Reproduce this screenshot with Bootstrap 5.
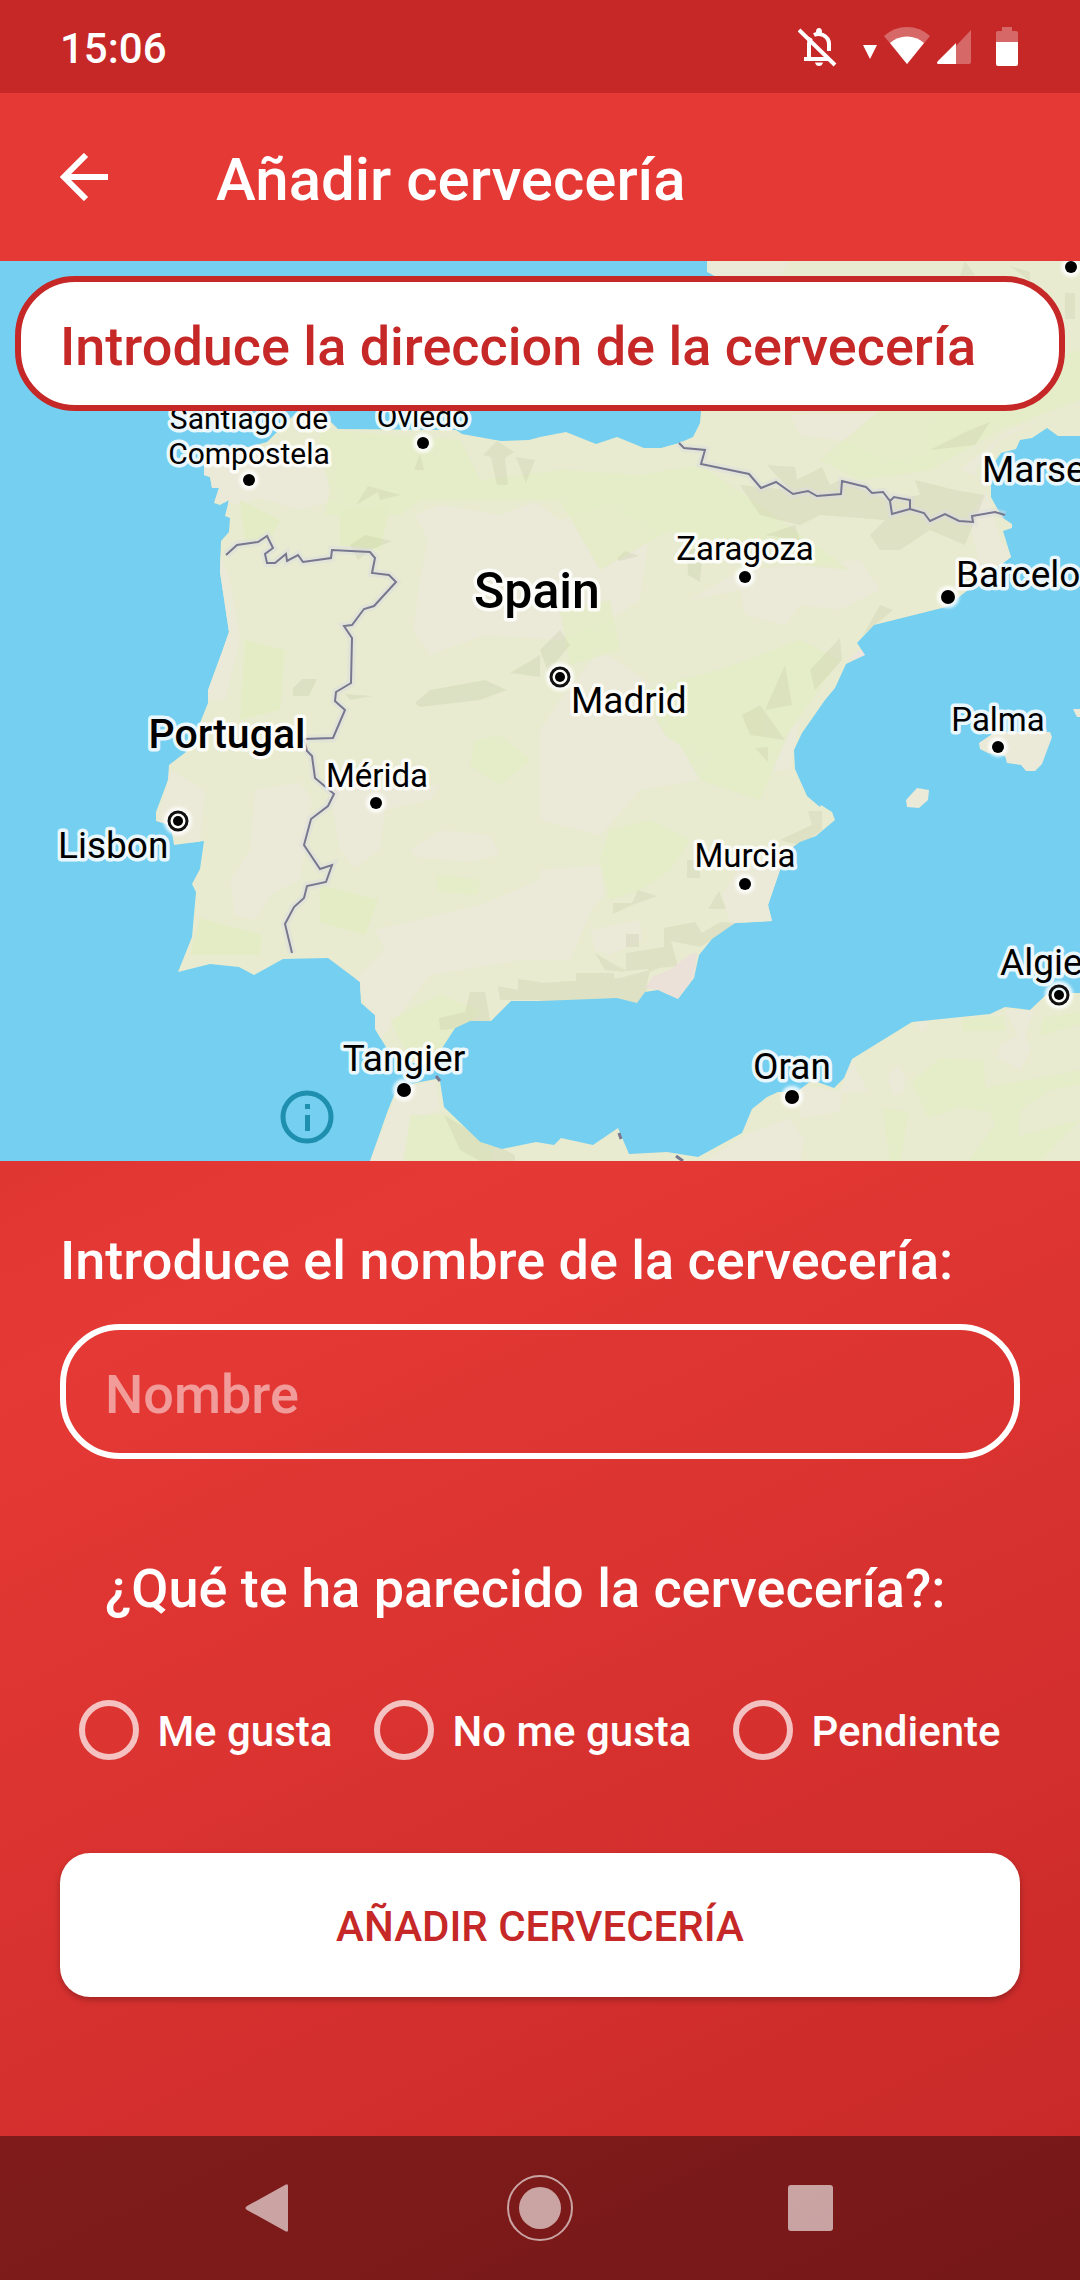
<!DOCTYPE html>
<html lang="es">
<head>
<meta charset="utf-8">
<meta name="viewport" content="width=device-width, initial-scale=1">
<title>Añadir cervecería</title>
<link href="https://cdn.jsdelivr.net/npm/bootstrap@5.3.0/dist/css/bootstrap.min.css" rel="stylesheet">
<style>
  body {
    font-family: Roboto, "Liberation Sans", sans-serif;
    font-weight: 500;
    font-size: 54px;
    line-height: 63px;
    color: #fff;
  }
  .screen { background: linear-gradient(155deg, #c62828, #e53935 50%, #c62828); }
  .status-bar { height: 93px; padding: 0 62px 0 60px; background: #c62828; font-size: 42px; line-height: 48px; }
  .clock { padding-top: 4px; }
  .status-icons { gap: 7px; }
  .status-icons .bell { margin-right: 18px; }
  .status-icons .battery { margin-left: 18px; }
  .app-bar { height: 168px; padding: 0 60px; background: #e53935; }
  .app-title { font-size: 60px; line-height: 70px; font-weight: 500; margin-left: 108px; padding-top: 6px; }
  .search-holder { top: 15px; left: 15px; right: 15px; }
  .pill, .pill:focus {
    height: 135px;
    border: 6px solid #fff;
    border-radius: 60px;
    padding: 6px 39px 0;
    background: transparent;
    color: #fff;
    font-size: 54px;
    font-weight: 500;
    line-height: 63px;
  }
  .pill::placeholder { color: rgba(255, 255, 255, .5); opacity: 1; }
  .pill-search, .pill-search:focus { border-color: #c62828; background: #fff; color: #c62828; }
  .pill-search::placeholder { color: #c62828; }
  .place-form { padding: 68px 60px 100px; }
  .name-label { margin-bottom: 32px; }
  .opinion { margin-top: 98px; }
  .opinion legend { font-size: 54px; line-height: 63px; padding-left: 45px; margin-bottom: 80px; }
  .choices { gap: 42px; }
  .choice { gap: 18px; font-size: 42px; line-height: 56px; }
  .choice label { padding-top: 4px; }
  .choice .form-check-input {
    width: 60px; height: 60px; margin: 0;
    border: 6px solid rgba(255, 255, 255, .7);
    background-color: transparent;
  }
  .send { height: 144px; margin-top: 93px; padding-top: 8px; border-radius: 30px; font-size: 42px; font-weight: 500; color: #c62828; box-shadow: 0 3px 6px rgba(0, 0, 0, .25); }
  .nav-keys { height: 144px; background: rgba(0, 0, 0, .4); gap: 203px; }
  .key { padding: 0; border: 0; background: none; line-height: 0; }
  .village { font-size: 30px; font-weight: 400; }
  .town { font-size: 33px; font-weight: 400; }
  .city { font-size: 37px; font-weight: 400; }
  .nation { font-size: 41px; font-weight: 500; }
  .nation-lg { font-size: 50px; font-weight: 500; }
  .map-text { fill: #000; stroke: #fff; stroke-opacity: .85; stroke-width: 7; stroke-linejoin: round; paint-order: stroke; }
</style>
</head>
<body>
<div class="screen d-flex flex-column min-vh-100">

  <div class="status-bar d-flex align-items-center justify-content-between">
    <span class="clock">15:06</span>
    <div class="status-icons d-flex align-items-center">
      <svg class="bell" width="40" height="40" viewBox="0 0 40 40" fill="none" stroke="#fff" stroke-width="4" aria-hidden="true">
        <path d="M1 3 37 38"/>
        <path d="M6 32H30M11 32V17Q11 14 13 11M16 8Q20 6 25 8Q31 11 31 17V24" />
        <path d="M17 35.500H25Q24 39 21 39T17 35.500Z M18 5Q18 1 21 1T24 5V7H18Z" fill="#fff" stroke="none"/>
      </svg>
      <svg width="14" height="40" viewBox="0 0 14 40" aria-hidden="true"><path d="M0 18H14L7 32Z" fill="#fff"/></svg>
      <svg width="46" height="40" viewBox="0 0 46 40" aria-hidden="true">
        <path d="M23 37 0 9Q10 0 23 0T46 9Z" fill="#fff" fill-opacity=".3"/>
        <path d="M23 37 6 16Q13 9.500 23 9.500T40 16Z" fill="#fff"/>
      </svg>
      <svg width="34" height="40" viewBox="0 0 34 40" aria-hidden="true">
        <path d="M2 37 34 3V35Q34 37 32 37Z" fill="#fff" fill-opacity=".3"/>
        <path d="M19 37H1Q-1 36 1 34L19 16Z" fill="#fff"/>
      </svg>
      <svg class="battery" width="22" height="40" viewBox="0 0 22 40" aria-hidden="true">
        <path d="M0 15V6Q0 4 2 4H6V0H16V4H20Q22 4 22 6V15Z" fill="#fff" fill-opacity=".3"/>
        <path d="M0 15H22V37Q22 39 20 39H2Q0 39 0 37Z" fill="#fff"/>
      </svg>
    </div>
  </div>

  <header class="app-bar d-flex align-items-center">
    <a href="#" class="d-flex" aria-label="Volver">
      <svg width="48" height="48" viewBox="0 0 48 48" fill="none" stroke="#fff" stroke-width="6"><path d="M48 24H6M26 2 4 24 26 46"/></svg>
    </a>
    <h1 class="app-title mb-0">Añadir cervecería</h1>
  </header>

  <main>
    <div class="position-relative">
      <svg class="d-block w-100" viewBox="0 261 1080 900" role="img" aria-label="Mapa de España">
        <defs>
          <path id="iberia" d="M540 437 529 440 501 441 462 434 456 430 338 429 332 423 317 412 296 413 267 442 248 447 213 450 204 462V475L210 477 212 488H219L214 503 220 505 229 500 225 516 230 518 229 532 221 541 220 572 229 632 222 652 208 690V703L200 723 186 752 169 765 168 780 156 812V821L167 824 172 833 174 845 204 841 200 869 192 884 196 892 192 937 178 972 210 964 239 967 254 975 283 959 328 958 360 982 361 1003 375 1015V1029L386 1047 413 1063 425 1065 442 1048 455 1028 470 1021H491L511 1001H540L617 998 637 1003 645 992 658 990 678 999 694 978 699 955 712 939 735 923 772 921 768 905 780 870 793 847 800 842 816 836 835 820 832 812 821 805 820 807 807 796 795 769 794 750 802 733 825 700 835 688 846 664 865 655 857 643 874 625 946 607 998 567 1011 557 1003 531 1012 528V524L1003 518 997 508 991 497V467L1001 453 1016 449 1020 440 1032 438 1047 428 1058 436H1080V261H707V272L715 276 701 411 700 423 693 437 679 443 661 448H644L617 437 596 444 566 432Z"/>
          <path id="africa" d="M370 1161 388 1110 395 1093 415 1083 436 1079 440 1081 444 1107 480 1142 502 1149 536 1142 554 1145 561 1138 593 1145 618 1128 629 1154 667 1152 698 1157 742 1133 752 1109 767 1097 778 1092H797L812 1080 834 1088 844 1078 852 1059 912 1022 990 1014 1005 1007 1030 1010 1048 993H1080V1161Z"/>
          <path id="isles" d="M979 743 995 732H1050L1052 737 1042 764 1035 771H1026L1021 765 1007 763 1005 756 988 753 980 749ZM906 800 917 788 929 790 928 800 919 808 907 807ZM1073 709H1080V717H1077Z"/>
          <clipPath id="land"><use href="#iberia"/><use href="#africa"/></clipPath>
          <filter id="soft" x="-5%" y="-5%" width="110%" height="110%"><feGaussianBlur stdDeviation="1.500"/></filter>
        </defs>
        <rect y="261" width="1080" height="900" fill="#75cff0"/>
        <g fill="#e8ebcf"><use href="#iberia"/><use href="#africa"/></g>
        <use href="#isles" fill="#ebe9d7"/>
        <g clip-path="url(#land)">
          <!-- dry plains -->
          <g fill="#ebe9d7">
            <path d="M200 455 260 450 335 455 338 500 300 510 258 498 240 505 205 500Z"/>
            <path d="M415 515 440 505 500 515 535 502 560 520 610 505 650 530 640 600 610 620 560 640 485 635 430 655 413 630 420 580 428 540Z"/>
            <path d="M215 540 230 580 240 640 225 700 205 700 225 635Z"/>
            <path d="M255 790 300 782 312 800 300 880 270 895 255 920 235 915 230 880 250 850Z"/>
            <path d="M156 830 170 770 205 790 200 845Z"/>
            <path d="M330 790 440 785 430 800 385 810 380 850 355 868 340 850Z"/>
            <path d="M410 850 440 830 490 835 500 855 470 862 415 857Z"/>
            <path d="M375 930 480 905 540 880 600 890 570 960 520 960 430 975 380 1040 355 980 385 950Z"/>
            <path d="M540 730 560 700 600 650 660 690 670 740 710 760 700 780 640 790 600 835 540 820ZM540 870 600 865 605 895 570 930 540 950Z"/>
            <path d="M590 930 640 920 642 940 610 955 595 950ZM722 895 740 865 790 855 772 925H730Z"/>
            <path d="M690 600 740 570 860 560 880 590 840 610 800 605 785 625 745 615 740 590Z"/>
            <path d="M790 415 930 412 925 455 890 460 840 440 800 435Z"/>
            <path d="M1080 410 1030 425 1000 440 975 470 990 500 1000 540 1015 560 980 570 970 520 990 480 960 470 1010 430Z"/>
            <path d="M708 262H790L780 276H712Z"/>
            <path d="M800 1085 842 1092 840 1112 800 1118ZM790 1118 804 1140 800 1161H705L745 1135ZM852 1060 868 1092H840ZM890 1072 898 1065 906 1078 903 1092 895 1096 888 1082ZM1000 1045 1018 1035 1005 1010 1035 1010 1025 1034 1031 1050 1020 1070 997 1057ZM915 1022 930 1021 922 1032Z"/>
            <path d="M370 1161 398 1090 435 1080 440 1110 410 1120 402 1161ZM790 770 770 770 780 740 800 720Z"/>
          </g>
          <!-- woods and meadows -->
          <g fill="#e4ecc5">
            <path d="M320 430 460 440 480 480 560 470 640 475 700 465 780 520 850 570 700 555 670 530 600 570 560 500 420 500 400 515 325 515 330 490 320 450Z" opacity=".75"/>
            <path d="M240 500 280 520 270 540 245 545ZM245 640 285 650 280 710 240 720ZM340 510 390 505 380 550 340 545Z"/>
            <path d="M200 918 262 935 260 955 190 955ZM320 885 378 900 365 935 320 922Z"/>
            <path d="M640 690 720 670 800 640 840 660 790 730 760 800 700 780 680 745 665 735Z" opacity=".8"/>
            <path d="M610 830 650 820 690 840 670 870 640 890 610 900 600 860ZM390 1020 440 995 480 1010 440 1060 410 1060Z" opacity=".7"/>
            <path d="M963 1018 1002 1016 1006 1030 962 1031ZM940 1058 984 1060 985 1088 1080 1070V1084L1050 1090 1020 1110 1018 1136 1080 1120 1040 1161H968L995 1125 990 1112 960 1107 928 1118 912 1082ZM883 1108 908 1112 904 1140 900 1161H890ZM1040 1036 1043 1018 1080 1012V1024ZM410 1115H500L490 1161H405Z" opacity=".7"/>
            <path d="M880 410 1080 350V400L1000 430 930 470 860 480 820 460ZM475 740 500 735 530 760 500 785 470 765Z" opacity=".7"/>
            <path d="M437 875 480 880 478 895 437 892ZM560 610 610 600 620 650 570 665Z" opacity=".7"/>
          </g>
          <!-- relief shading -->
          <g fill="#7d8a50" opacity=".09">
            <path d="M483 455 497 441 514 452 505 458 508 485H497L491 457ZM516 457 535 460 526 483ZM420 454 424 470H414Z"/>
            <path d="M356 505 368 486 400 495 380 500 378 492ZM350 545 365 535 392 541 370 550 358 560ZM293 688 302 679H317L309 696H293Z"/>
            <path d="M415 703 430 690 485 680 507 690 480 700 420 707ZM345 694 373 696 350 700ZM510 673 540 655V677Z"/>
            <path d="M767 465 795 467 797 480 822 467 830 485 840 480 890 500 920 495 915 480 955 490 985 495 965 545 930 530 900 550H880L870 535 885 520 820 515 800 525 760 515 740 485 790 490Z"/>
            <path d="M765 535 795 525 800 540ZM687 549H703L700 582 688 575ZM617 558 625 551 639 556 620 561ZM863 635 880 605 893 610 875 625Z"/>
            <path d="M540 650 560 630 570 645 548 672ZM810 670 840 638 842 660 815 690ZM785 665 792 705 765 710ZM742 715 760 705 785 740 750 735ZM755 748 768 747V762Z"/>
            <path d="M970 430 990 422 975 445 930 450ZM965 261 975 275 960 276ZM1010 266 1030 272 1030 281ZM1065 293H1075V319H1065Z"/>
            <path d="M613 903 632 903 638 890 657 896 632 905 613 914ZM719 891 726 909H708ZM687 860H700V878H687ZM626 934H639V947H626Z"/>
            <path d="M664 928 695 922 702 933 720 922 735 923 712 940 700 947 671 941 678 966 626 971 600 957 626 970V953L664 947Z"/>
            <path d="M576 973H614V986H576ZM540 983 620 978 650 970 646 988 637 1003H540ZM620 1000 625 988 650 985 638 1003Z"/>
            <path d="M640 960 665 965 650 972ZM595 953 626 972 605 970ZM800 845 780 840 812 825 808 811H822V830Z"/>
            <path d="M439 1018 465 1012 470 992H485L491 1025 440 1030ZM498 986 518 990V979L540 982V1000H500ZM444 1115 485 1140 515 1155V1161H480L460 1150Z"/>
          </g>
          <path d="M670 970 690 954 697 953 694 978 678 999 658 990 645 988 653 976Z" fill="#ecdfdb" opacity=".8"/>
          <path d="M846 662 870 642 857 643 865 655Z" fill="#eee4de"/>
        </g>
        <!-- frontiers -->
        <defs>
          <path id="frontiers" d="M226 555 237 545 258 542 267 536 273 548 265 554 267 563H275L286 554 287 561 298 555 303 562 331 558 332 550 370 552 375 558 372 573 389 575 396 582 374 606 364 609 352 625 344 626 352 638 351 683 336 692 335 701 345 710 333 738 304 739 307 751 312 756 315 778 334 794 328 806 311 819 304 845 320 869 332 865 326 882 307 886 304 898 294 907 285 924 292 953M679 443 684 448 705 450 701 464 749 474 761 488 776 482 793 494 808 491 817 496 841 494 842 481 866 487 872 493 883 492 890 501 894 497 910 500V509L892 514 890 501M910 509 924 513 930 521 945 514 959 521 973 522 972 516 995 512 1005 515"/>
        </defs>
        <g fill="none">
          <use href="#frontiers" stroke="#dcdce2" stroke-width="8" stroke-opacity=".45"/>
          <use href="#frontiers" stroke="#77788f" stroke-width="2"/>
          <path stroke="#77788f" stroke-width="3" d="M436 1076 440 1081M619 1133 621 1139M676 1156 683 1161"/>
        </g>
        <!-- town dots -->
        <g fill="#fff" fill-opacity=".85" filter="url(#soft)">
          <circle cx="249" cy="480" r="10"/><circle cx="423" cy="443" r="10"/><circle cx="745" cy="577" r="10"/><circle cx="948" cy="597" r="11"/><circle cx="376" cy="803" r="10"/><circle cx="745" cy="884" r="10"/><circle cx="998" cy="747" r="10"/><circle cx="792" cy="1097" r="11"/><circle cx="404" cy="1090" r="11"/><circle cx="1071" cy="267" r="10"/>
          <circle cx="560" cy="677" r="14"/><circle cx="178" cy="821" r="14"/><circle cx="1059" cy="995" r="14"/>
        </g>
        <g>
          <circle cx="249" cy="480" r="6"/><circle cx="423" cy="443" r="6"/><circle cx="745" cy="577" r="6"/><circle cx="948" cy="597" r="7"/><circle cx="376" cy="803" r="6"/><circle cx="745" cy="884" r="6"/><circle cx="998" cy="747" r="6"/><circle cx="792" cy="1097" r="7"/><circle cx="404" cy="1090" r="7"/><circle cx="1071" cy="267" r="6"/>
          <circle cx="560" cy="677" r="5"/><circle cx="178" cy="821" r="5"/><circle cx="1059" cy="995" r="5"/>
        </g>
        <g fill="none" stroke="#111" stroke-width="3"><circle cx="560" cy="677" r="9"/><circle cx="178" cy="821" r="9"/><circle cx="1059" cy="995" r="9"/></g>
        <!-- place names -->
        <g class="map-text village" text-anchor="middle">
          <text x="249" y="429">Santiago de</text>
          <text x="249" y="464">Compostela</text>
          <text x="423" y="427">Oviedo</text>
        </g>
        <g class="map-text town" text-anchor="middle">
          <text x="745" y="560">Zaragoza</text>
          <text x="377" y="787">Mérida</text>
          <text x="745" y="867">Murcia</text>
          <text x="998" y="731">Palma</text>
        </g>
        <g class="map-text city">
          <text x="982" y="482">Marse</text>
          <text x="956" y="587">Barcelo</text>
          <text x="571" y="713">Madrid</text>
          <text x="58" y="858">Lisbon</text>
          <text x="1000" y="975">Algie</text>
          <text x="404" y="1071" text-anchor="middle">Tangier</text>
          <text x="792" y="1079" text-anchor="middle">Oran</text>
        </g>
        <g class="map-text" text-anchor="middle">
          <text class="nation-lg" x="537" y="608">Spain</text>
          <text class="nation" x="227" y="748">Portugal</text>
        </g>
        <g fill="#1e8fae">
          <circle cx="307" cy="1117" r="24" fill="none" stroke="#1e8fae" stroke-width="5"/>
          <path d="M305 1104H310V1109H305ZM305 1115H310V1131H305Z"/>
        </g>
      </svg>
      <div class="search-holder position-absolute">
        <input class="pill pill-search form-control" type="text" aria-label="Dirección" placeholder="Introduce la direccion de la cervecería">
      </div>
    </div>

    <form class="place-form">
      <label class="name-label d-block" for="place-name">Introduce el nombre de la cervecería:</label>
      <input class="pill form-control" type="text" id="place-name" placeholder="Nombre">
      <fieldset class="opinion">
        <legend>¿Qué te ha parecido la cervecería?:</legend>
        <div class="choices d-flex justify-content-center">
          <div class="choice d-flex align-items-center">
            <input class="form-check-input" type="radio" name="opinion" id="like"><label for="like">Me gusta</label>
          </div>
          <div class="choice d-flex align-items-center">
            <input class="form-check-input" type="radio" name="opinion" id="dislike"><label for="dislike">No me gusta</label>
          </div>
          <div class="choice d-flex align-items-center">
            <input class="form-check-input" type="radio" name="opinion" id="pending"><label for="pending">Pendiente</label>
          </div>
        </div>
      </fieldset>
      <button type="submit" class="send btn btn-light bg-white border-0 w-100 text-uppercase">Añadir cervecería</button>
    </form>
  </main>

  <nav class="nav-keys d-flex align-items-center justify-content-center mt-auto" aria-label="Sistema">
    <button type="button" class="key" aria-label="Atrás"><svg width="68" height="68" viewBox="0 0 68 68"><path d="M12 32 50 11Q53 9 53 12V56Q53 59 50 57L12 36Q9 34 12 32Z" fill="#fff" fill-opacity=".6"/></svg></button>
    <button type="button" class="key" aria-label="Inicio"><svg width="68" height="68" viewBox="0 0 68 68" fill="#fff" fill-opacity=".6"><circle cx="34" cy="34" r="21"/><circle cx="34" cy="34" r="32" fill="none" stroke="#fff" stroke-opacity=".6" stroke-width="2"/></svg></button>
    <button type="button" class="key" aria-label="Recientes"><svg width="68" height="68" viewBox="0 0 68 68"><rect x="11" y="11" width="45" height="46" rx="3" fill="#fff" fill-opacity=".6"/></svg></button>
  </nav>
</div>
<script src="https://cdn.jsdelivr.net/npm/bootstrap@5.3.0/dist/js/bootstrap.bundle.min.js"></script>
</body>
</html>
